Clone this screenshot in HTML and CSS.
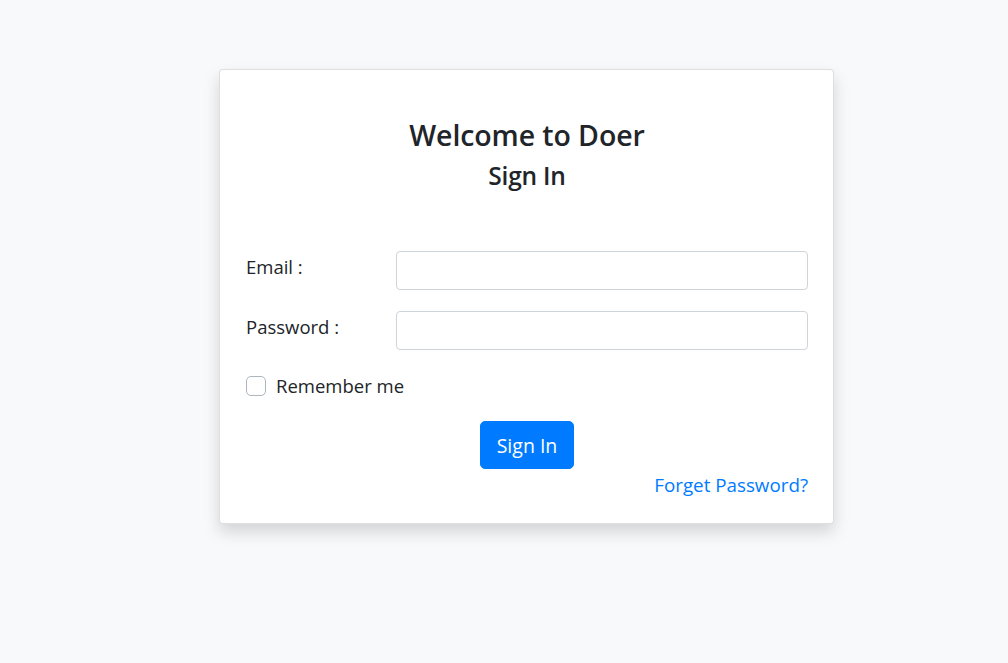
FILE: index.html
```html
<!DOCTYPE html>
<html lang="en">
<head>
<meta charset="utf-8">
<title>Doer - Sign In</title>
<link rel="stylesheet" href="styles.css">
</head>
<body>
<main class="page">
  <section class="card">
    <header class="card-head">
      <h1 class="title">Welcome to Doer</h1>
      <h2 class="subtitle">Sign In</h2>
    </header>
    <form class="form">
      <div class="field">
        <label class="label" for="email">Email :</label>
        <input class="input" id="email" type="email">
      </div>
      <div class="field">
        <label class="label" for="password">Password :</label>
        <input class="input" id="password" type="password">
      </div>
      <label class="remember">
        <span class="check"></span>
        <span class="remember-text">Remember me</span>
      </label>
      <div class="actions">
        <button class="btn" type="button">Sign In</button>
      </div>
      <div class="forgot-row">
        <a class="forgot" href="#">Forget Password?</a>
      </div>
    </form>
  </section>
</main>
</body>
</html>
```

FILE: styles.css
```css
* { box-sizing: border-box; }
html, body { margin: 0; padding: 0; }
body {
  background: #f8f9fa;
  font-family: "Open Sans", "Noto Sans", "Liberation Sans", sans-serif;
  color: #212529;
  width: 1008px;
  height: 663px;
  overflow: hidden;
}
.page {
  padding: 69px 0 0 219px;
}
.card {
  width: 615px;
  height: 455px;
  background: #fff;
  border: 1px solid rgba(0,0,0,.125);
  border-radius: 4px;
  box-shadow: 0 .5rem 1rem rgba(0,0,0,.15);
  padding: 0 25px 0 26px;
}
.card-head {
  text-align: center;
  padding-top: 47px;
}
.title {
  margin: 0;
  font-size: 28.5px;
  font-weight: 600;
  line-height: 36px;
  letter-spacing: -0.1px;
}
.subtitle {
  margin: 8px 0 0;
  font-size: 24.5px;
  font-weight: 600;
  line-height: 30px;
  letter-spacing: -0.2px;
}
.form {
  margin-top: 60px;
  display: flex;
  flex-direction: column;
}
.field {
  display: grid;
  grid-template-columns: 150px 1fr;
  align-items: start;
  margin-bottom: 21px;
}
.label {
  font-size: 18.5px;
  line-height: 26px;
  padding-top: 3px;
}
.input {
  height: 39px;
  border: 1px solid #ced4da;
  border-radius: 4px;
  background: #fff;
  font: inherit;
  padding: 6px 12px;
}
.remember {
  display: flex;
  align-items: center;
  gap: 10px;
  margin-top: 5px;
  height: 20px;
}
.check {
  width: 20px;
  height: 20px;
  border: 1px solid #adb5bd;
  border-radius: 5px;
  background: #fff;
}
.remember-text {
  font-size: 18.5px;
  line-height: 20px;
}
.actions {
  display: flex;
  justify-content: center;
  margin-top: 25px;
}
.btn {
  height: 48px;
  width: 94px;
  border: 1px solid #007bff;
  background: #007bff;
  color: #fff;
  border-radius: 5px;
  font-family: inherit;
  font-size: 19.5px;
  padding: 0;
}
.forgot-row {
  display: flex;
  justify-content: flex-end;
  margin-top: 3px;
}
.forgot {
  color: #007bff;
  text-decoration: none;
  font-size: 18.8px;
  line-height: 26px;
}
```
